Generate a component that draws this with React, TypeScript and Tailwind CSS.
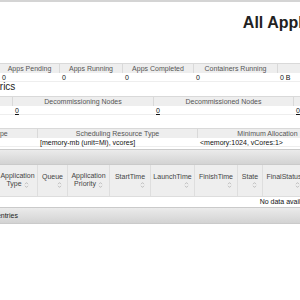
import type React from "react"

interface Col {
  label: string
  value: string
  w: string
  link?: boolean
}

const clusterMetrics: Col[] = [
  { label: "Apps Submitted", value: "0", w: "w-[70px]" },
  { label: "Apps Pending", value: "0", w: "w-[60px]" },
  { label: "Apps Running", value: "0", w: "w-[63px]" },
  { label: "Apps Completed", value: "0", w: "w-[71px]" },
  { label: "Containers Running", value: "0", w: "w-[84px]" },
  { label: "Memory Used", value: "0 B", w: "w-[90px]" },
]

const nodeMetrics: Col[] = [
  { label: "Active Nodes", value: "0", w: "w-[80px]", link: true },
  { label: "Decommissioning Nodes", value: "0", w: "w-[141px]", link: true },
  { label: "Decommissioned Nodes", value: "0", w: "w-[140px]", link: true },
  { label: "Lost Nodes", value: "0", w: "w-[70px]", link: true },
]

const schedulerMetrics: Col[] = [
  { label: "Scheduler Type", value: "Capacity Scheduler", w: "w-[107px]" },
  { label: "Scheduling Resource Type", value: "[memory-mb (unit=Mi), vcores]", w: "w-[160px]" },
  { label: "Minimum Allocation", value: "<memory:1024, vCores:1>", w: "w-[140px]" },
  { label: "Maximum Allocation", value: "<memory:8192, vCores:4>", w: "w-[140px]" },
]

const appColumns: { lines: string[]; w: string }[] = [
  { lines: ["Name"], w: "w-[83px]" },
  { lines: ["Application", "Type"], w: "w-[40px]" },
  { lines: ["Queue"], w: "w-[30px]" },
  { lines: ["Application", "Priority"], w: "w-[42px]" },
  { lines: ["StartTime"], w: "w-[41px]" },
  { lines: ["LaunchTime"], w: "w-[44px]" },
  { lines: ["FinishTime"], w: "w-[43px]" },
  { lines: ["State"], w: "w-[25px]" },
  { lines: ["FinalStatus"], w: "w-[43px]" },
  { lines: ["Running", "Containers"], w: "w-[50px]" },
]

function SortIcon() {
  return (
    <svg width="5" height="8" viewBox="0 0 5 8" className="inline-block shrink-0">
      <path d="M1 3.2 L2.5 1.6 L4 3.2 M1 4.8 L2.5 6.4 L4 4.8" fill="none" stroke="#b3b3b3" strokeWidth="0.8" />
    </svg>
  )
}

function MetricsTable({ cols, offset }: { cols: Col[]; offset: string }) {
  return (
    <div className={offset}>
      <div className="flex h-[10px] bg-[#eeeeee] border-t border-[#d9d9d9] text-[#555]">
        {cols.map((c, i) => (
          <div
            key={c.label}
            className={`${c.w} shrink-0 text-center leading-[9px] whitespace-nowrap ${i > 0 ? "border-l border-[#d9d9d9]" : ""}`}
          >
            {c.label}
          </div>
        ))}
      </div>
      <div className="flex h-[9px] border-b border-[#eeeeee]">
        {cols.map((c) => (
          <div key={c.label} className={`${c.w} shrink-0 pl-[3px] leading-[9px] whitespace-nowrap text-[#111]`}>
            {c.link ? <span className="underline">{c.value}</span> : c.value}
          </div>
        ))}
      </div>
    </div>
  )
}

function Heading({ children, className }: { children: React.ReactNode; className: string }) {
  return (
    <div className={`ml-[-83px] whitespace-nowrap text-[10px] leading-[10px] text-[#222] ${className}`}>{children}</div>
  )
}

export default function App() {
  return (
    <div className="w-[300px] h-[300px] overflow-hidden bg-white text-[7px] leading-[9px] text-black font-['Liberation_Sans',Arial,sans-serif]">
      <div className="h-[2px] bg-[#d4d4d4]" />

      {/* Title */}
      <div className="w-[606px] pt-[13px] text-center text-[16px] leading-[16px] font-bold text-[#222] whitespace-nowrap">
        All Applications
      </div>

      <Heading className="h-[32px] pt-[18px]">Cluster Metrics</Heading>
      <MetricsTable cols={clusterMetrics} offset="ml-[-71px]" />

      <Heading className="h-[14px]">Cluster Nodes Metrics</Heading>
      <MetricsTable cols={nodeMetrics} offset="ml-[-68px]" />

      <Heading className="h-[13px]">Scheduler Metrics</Heading>
      <MetricsTable cols={schedulerMetrics} offset="ml-[-70px]" />

      {/* Applications table */}
      <div className="ml-[-86px] w-[770px] mt-[2px]">
        <div className="h-[16px] bg-gradient-to-b from-[#ebebeb] to-[#d3d3d3] border border-[#cacaca]" />
        <div className="flex h-[32px] bg-[#eeeeee] border-b border-[#dddddd] text-[#444]">
          {appColumns.map((c, i) => (
            <div
              key={c.lines.join(" ")}
              className={`${c.w} shrink-0 flex flex-col justify-center leading-[8px] ${i > 0 ? "border-l border-[#dedede]" : ""}`}
            >
              {c.lines.length === 2 ? (
                <div className="text-center whitespace-nowrap">
                  {c.lines[0]}
                  <br />
                  {c.lines[1]}
                  <span className="ml-[2px]">
                    <SortIcon />
                  </span>
                </div>
              ) : (
                <>
                  <div className="text-center whitespace-nowrap">{c.lines[0]}</div>
                  <div className="flex justify-end pr-[5px] h-[8px]">
                    <SortIcon />
                  </div>
                </>
              )}
            </div>
          ))}
          <div className="flex-1 border-l border-[#dedede]" />
        </div>
        <div className="h-[10px] text-center leading-[10px] text-[#111]">No data available in table</div>
        <div className="h-[17px] flex items-center pl-[20px] bg-gradient-to-b from-[#ebebeb] to-[#d3d3d3] border border-[#cacaca] text-[#222]">
          Showing 0 to 0 of 0 entries
        </div>
      </div>
    </div>
  )
}
